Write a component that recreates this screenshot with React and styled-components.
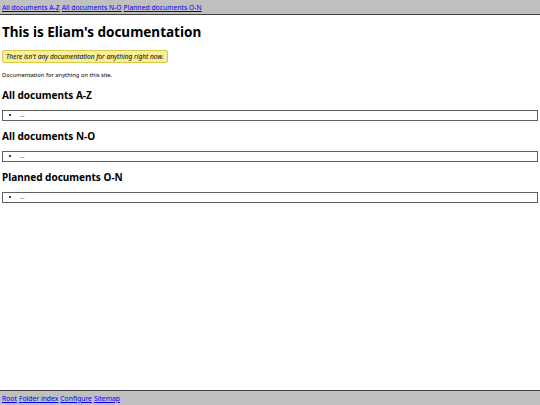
import styled, { createGlobalStyle } from "styled-components"

const GlobalStyle = createGlobalStyle`
  html, body {
    margin: 0;
    padding: 0;
    background: #ffffff;
    font-family: "Noto Sans", "Open Sans", sans-serif;
    color: #000000;
  }
`

const Page = styled.div`
  display: flex;
  flex-direction: column;
  min-height: 405px;
`

const Bar = styled.nav`
  display: flex;
  align-items: center;
  gap: 2px;
  height: 14px;
  padding: 0 2px;
  background-color: #c0c0c0;
  border-${(p) => (p.$bottom ? "top" : "bottom")}: 1px solid #404040;
  font-size: 6.8px;
`

const BarLink = styled.a`
  color: #0000ee;
  text-decoration: underline;
`

const Main = styled.main`
  flex: 1;
  padding: 0 2px;
`

const Title = styled.h1`
  margin: 8px 0 9px;
  font-size: 13.5px;
  font-weight: 700;
`

const Notice = styled.div`
  width: fit-content;
  padding: 1px 3px;
  background-color: #f7ef9a;
  border: 1px solid #d8c94a;
  border-radius: 2px;
  font-size: 6.6px;
  font-style: italic;
`

const Text = styled.p`
  margin: 8px 0 9px;
  font-size: 5.8px;
`

const SectionTitle = styled.h2`
  margin: 8px 0;
  font-size: 10px;
  font-weight: 700;
`

const DocList = styled.ul`
  margin: 0;
  padding: 0 0 0 17px;
  border: 1px solid #606060;
  font-size: 5.5px;
  line-height: 9px;
`

const Footer = () => (
  <Bar $bottom>
    <BarLink href="#">Root</BarLink>
    <BarLink href="#">Folder index</BarLink>
    <BarLink href="#">Configure</BarLink>
    <BarLink href="#">Sitemap</BarLink>
  </Bar>
)

const sections = ["All documents A-Z", "All documents N-O", "Planned documents O-N"]

const App = () => {
  return (
    <Page>
      <GlobalStyle />
      <Bar>
        {sections.map((s) => (
          <BarLink href="#" key={s}>{s}</BarLink>
        ))}
      </Bar>
      <Main>
        <Title>This is Eliam's documentation</Title>
        <Notice>There isn't any documentation for anything right now.</Notice>
        <Text>Documentation for anything on this site.</Text>
        {sections.map((s) => (
          <section key={s}>
            <SectionTitle>{s}</SectionTitle>
            <DocList>
              <li>...</li>
            </DocList>
          </section>
        ))}
      </Main>
      <Footer />
    </Page>
  )
}

export default App
